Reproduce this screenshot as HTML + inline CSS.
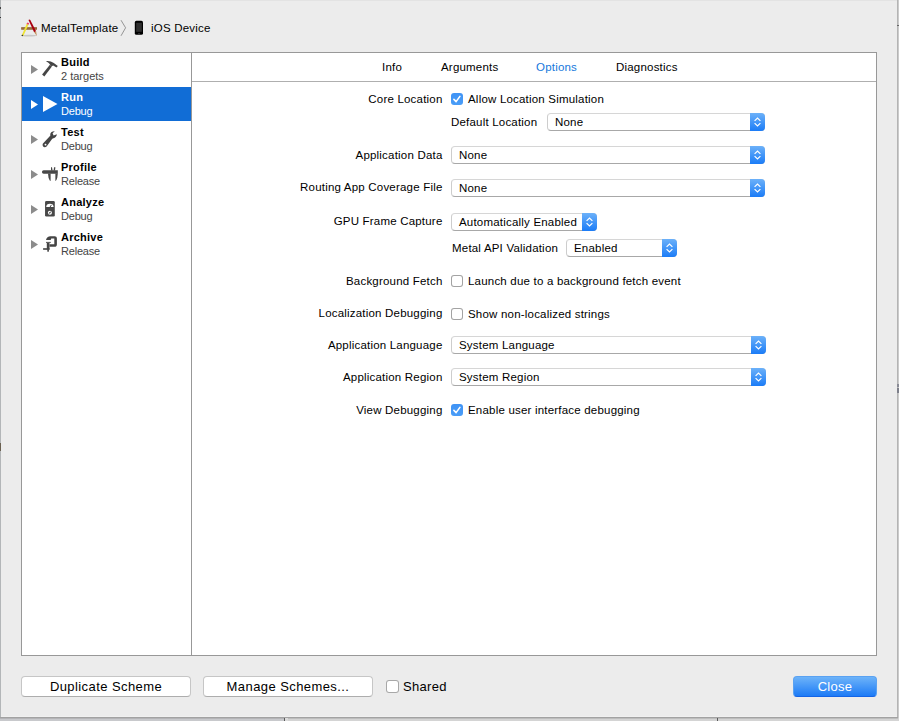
<!DOCTYPE html>
<html><head><meta charset="utf-8">
<style>
*{margin:0;padding:0;box-sizing:border-box}
html,body{width:899px;height:721px;overflow:hidden;background:#d4d4d4}
body{position:relative;font-family:"Liberation Sans",sans-serif;font-size:11.5px;letter-spacing:0.2px;color:#000}
.a{position:absolute}
.t{position:absolute;white-space:nowrap;line-height:14px;height:14px}
.r{text-align:right}
#sheet{position:absolute;left:1px;top:0;width:896px;height:716px;background:#ececec}
#box{position:absolute;left:21px;top:52px;width:856px;height:604px;border:1px solid #989898;background:#fff}
#side{position:absolute;left:22px;top:53px;width:169px;height:602px;background:#fff}
#div{position:absolute;left:191px;top:53px;width:1px;height:602px;background:#989898}
#tabline{position:absolute;left:192px;top:81px;width:684px;height:1px;background:#afafaf}
.sel{position:absolute;left:22px;top:87px;width:169px;height:34px;background:#116dd6}
.tri{position:absolute;width:0;height:0;border-top:4.5px solid transparent;border-bottom:4.5px solid transparent;border-left:7px solid #8a8a8a}
.pop{position:absolute;height:18px;background:#fff;border-radius:4px;border:1px solid #cdcdcd;border-top-color:#d6d6d6;border-bottom-color:#a8a8a8}
.pop .st{position:absolute;right:-1px;top:-1px;width:15px;height:18px;border-radius:0 4px 4px 0;background:linear-gradient(#6cb1f9,#1b7cf7)}
.pop .st svg{position:absolute;left:0;top:0}
.cb{position:absolute;width:12px;height:12px;border-radius:3px}
.cbon{background:linear-gradient(#3f93f5,#4a9df7)}
.cboff{background:#fff;box-shadow:inset 0 0 0 1px #a3a3a3}
.btn{position:absolute;height:21px;background:#fff;border-radius:4px;border:1px solid #c6c6c6;border-bottom-color:#adadad;text-align:center;font-size:13px;line-height:20px}
</style></head><body>
<div class="a" style="left:0;top:0;width:1px;height:717px;background:#b3b6b8"></div>
<div class="a" style="left:0;top:7px;width:1px;height:2px;background:#444"></div>
<div class="a" style="left:0;top:17px;width:1px;height:1px;background:#333"></div>
<div class="a" style="left:0;top:443px;width:1px;height:8px;background:#6a6050"></div>
<div class="a" style="left:0;top:718px;width:285px;height:3px;background:#c8c9cc"></div>
<div class="a" style="left:0;top:718px;width:898px;height:1px;background:rgba(120,120,120,0.25)"></div>
<div class="a" style="left:284px;top:718px;width:1px;height:3px;background:#5a5a5a"></div>
<div class="a" style="left:285px;top:718px;width:3px;height:3px;background:#dcdcdc"></div>
<div class="a" style="left:717px;top:718px;width:1px;height:3px;background:#5a5a5a"></div>
<div class="a" style="left:897px;top:0;width:1px;height:718px;background:#b4b4b4"></div>
<div class="a" style="left:898px;top:0;width:1px;height:718px;background:#cbcbcb"></div>
<div class="a" style="left:897px;top:25px;width:2px;height:1px;background:#666"></div>
<div class="a" style="left:897px;top:384px;width:2px;height:3px;background:#8a8c96"></div><div class="a" style="left:897px;top:388px;width:2px;height:5px;background:#7d7f8a"></div>
<div class="a" style="left:0;top:717px;width:898px;height:1px;background:#a2a2a2"></div>
<div id="sheet"></div>
<div class="a" style="left:1px;top:0;width:896px;height:1px;background:#e3e3e3"></div>
<div class="a" style="left:1px;top:716px;width:896px;height:1px;background:#f0f0f0"></div>
<!-- breadcrumb -->
<svg class="a" style="left:18px;top:16px" width="22" height="22" viewBox="0 0 22 22">
<ellipse cx="11" cy="19.6" rx="8" ry="0.9" fill="#bdbdbd" opacity="0.8"/>
<rect x="3.2" y="11.2" width="15.8" height="2.5" fill="#8e5f2e"/>
<rect x="3.8" y="11.9" width="14.6" height="0.6" fill="#b58a55" opacity="0.7"/>
<path d="M10.5,4 C10.9,3.3 11.9,3.3 12.3,4 L18.1,15.3 L16.1,16.3 Z" fill="#a8000e"/>
<path d="M16.1,16.2 L18.1,15.3 L18.9,19.9 Z" fill="#c39060"/>
<path d="M3.7,19.4 L8.7,7.7 L10.6,8.6 L5.3,20.1 Z" fill="#eee334"/>
<path d="M8.5,7.9 L9.3,6.5 L11.2,7.2 L10.6,8.8 Z" fill="#f0406a"/>
<path d="M3.5,19.6 L4.1,18.6 L5.2,19.7 L4.2,20.2 Z" fill="#222"/>
</svg>
<svg class="a" style="left:118px;top:16px" width="30" height="22" viewBox="0 0 30 22">
<path d="M3,4.2 L7.6,11.8 L3,19.8" stroke="#8a8a8a" stroke-width="0.9" fill="none"/>
<rect x="16.8" y="4.8" width="8.2" height="14" rx="1.6" fill="#000"/>
<rect x="18.2" y="6.8" width="5.6" height="9" fill="#2e2e2e"/>
<rect x="20.2" y="17.1" width="1.6" height="0.7" rx="0.35" fill="#555"/>
</svg>
<div class="t" style="left:41px;top:21px">MetalTemplate</div>
<div class="t" style="left:151px;top:21px">iOS Device</div>

<div id="box"></div>
<div id="div"></div>
<div id="tabline"></div>
<div class="sel"></div>

<!-- sidebar rows -->
<svg class="a" style="left:31px;top:65px" width="7" height="9" viewBox="0 0 7 9"><path d="M0,0 L7,4.5 L0,9 Z" fill="#8c8c8c"/></svg>
<svg class="a" style="left:38px;top:57px" width="24" height="24" viewBox="0 0 24 24" fill="#454545"><path d="M8,4.2 C10.5,3.7 13.5,4.5 15.8,6 L19.8,9 L18.5,10.6 L15.2,8.6 L13.6,9.3 L12.3,7.9 C11.2,6.3 9.8,5 8,4.2 Z"/><path d="M4.1,17.5 L11.9,7.7 L13.9,9.4 L6.3,19.6 Z"/></svg>
<div class="t" style="left:61px;top:55px;font-size:11px;font-weight:bold;color:#000;letter-spacing:0.25px">Build</div>
<div class="t" style="left:61px;top:69px;font-size:11px;color:#444;letter-spacing:0">2 targets</div>
<svg class="a" style="left:31px;top:100px" width="7" height="9" viewBox="0 0 7 9"><path d="M0,0 L7,4.5 L0,9 Z" fill="#fff"/></svg>
<svg class="a" style="left:38px;top:92px" width="24" height="24" viewBox="0 0 24 24" fill="#fff"><path d="M5,39 L19.5,47 L5,55 Z" transform="translate(0,-35)"/></svg>
<div class="t" style="left:61px;top:90px;font-size:11px;font-weight:bold;color:#fff;letter-spacing:0.25px">Run</div>
<div class="t" style="left:61px;top:104px;font-size:11px;color:#fff;letter-spacing:-0.2px">Debug</div>
<svg class="a" style="left:31px;top:135px" width="7" height="9" viewBox="0 0 7 9"><path d="M0,0 L7,4.5 L0,9 Z" fill="#8c8c8c"/></svg>
<svg class="a" style="left:38px;top:127px" width="24" height="24" viewBox="0 0 24 24" fill="#454545"><path d="M12.2,10.8 L12.3,7 C12.5,5.2 14.2,4.1 16.8,4.2 L14.6,6.2 L15.6,8.6 L18.9,7.3 C18.7,9.6 17.2,11.2 14.6,11.4 Z"/><path d="M5.2,16.2 L12.2,8.8 L14.8,11 L8.6,19.4 C7.6,20.4 5.6,20.4 5,19.2 C4.4,18.2 4.5,16.9 5.2,16.2 Z M6.6,17.3 A0.9,0.9 0 1 0 8.4,17.9 A0.9,0.9 0 1 0 6.6,17.3 Z" fill-rule="evenodd"/></svg>
<div class="t" style="left:61px;top:125px;font-size:11px;font-weight:bold;color:#000;letter-spacing:0.25px">Test</div>
<div class="t" style="left:61px;top:139px;font-size:11px;color:#444;letter-spacing:-0.2px">Debug</div>
<svg class="a" style="left:31px;top:170px" width="7" height="9" viewBox="0 0 7 9"><path d="M0,0 L7,4.5 L0,9 Z" fill="#8c8c8c"/></svg>
<svg class="a" style="left:38px;top:162px" width="24" height="24" viewBox="0 0 24 24" fill="#484848"><g transform="translate(0,0.9)"><path d="M5.6,7.3 L19.8,7.3 L19.8,10.8 L5.6,10.8 C4.7,10.8 4,10.1 4,9.05 C4,8 4.7,7.3 5.6,7.3 Z"/><path d="M10,10.5 L12.6,10.5 L12.6,18.1 C12,17.8 11.2,17.1 10.5,14.5 Z"/><path d="M17.4,10.5 L19.8,10.5 L19.3,14.5 C18.8,16.9 18,17.8 17.4,18.1 Z"/><path d="M13,4.4 L14,4.4 L14.6,7.5 L13,7.5 Z"/><path d="M16,4.4 L17.4,4.4 L17,7.5 L15.6,7.5 Z"/></g></svg>
<div class="t" style="left:61px;top:160px;font-size:11px;font-weight:bold;color:#000;letter-spacing:0.25px">Profile</div>
<div class="t" style="left:61px;top:174px;font-size:11px;color:#444;letter-spacing:-0.2px">Release</div>
<svg class="a" style="left:31px;top:205px" width="7" height="9" viewBox="0 0 7 9"><path d="M0,0 L7,4.5 L0,9 Z" fill="#8c8c8c"/></svg>
<svg class="a" style="left:38px;top:197px" width="24" height="24" viewBox="0 0 24 24"><rect x="7.05" y="4" width="9.75" height="15.6" rx="1.3" fill="#484848"/><path d="M8.2,10.1 A3.7,3.4 0 0 1 15.6,10.1 Z" fill="#fff"/><path d="M11.9,10.3 L13.4,7.9" stroke="#484848" stroke-width="1" fill="none"/><circle cx="11.9" cy="15.7" r="1.35" stroke="#fff" stroke-width="1.4" fill="none"/><path d="M10.6,16.9 L13.2,14.5" stroke="#484848" stroke-width="0.8" fill="none"/></svg>
<div class="t" style="left:61px;top:195px;font-size:11px;font-weight:bold;color:#000;letter-spacing:0.25px">Analyze</div>
<div class="t" style="left:61px;top:209px;font-size:11px;color:#444;letter-spacing:-0.2px">Debug</div>
<svg class="a" style="left:31px;top:240px" width="7" height="9" viewBox="0 0 7 9"><path d="M0,0 L7,4.5 L0,9 Z" fill="#8c8c8c"/></svg>
<svg class="a" style="left:38px;top:232px" width="24" height="24" viewBox="0 0 24 24" fill="#454545"><path d="M8,8.1 C8.4,5.8 10.2,4.2 12.5,4.2 L16.6,4.2 C18,4.2 18.9,5.1 18.9,6.5 L18.9,12.5 C18.9,13.9 18,14.8 16.6,14.8 L11.5,14.8 L11.5,12.3 L16.3,12.3 L16.3,6.6 L13.6,6.6 C13.1,6.6 12.8,7.2 12.8,8.1 Z"/><rect x="8" y="9.9" width="4.8" height="0.9"/><rect x="8.8" y="10.8" width="2.7" height="6.8"/><rect x="9.3" y="17.4" width="1.6" height="2.3"/><rect x="5.1" y="16.2" width="6.4" height="1.6"/></svg>
<div class="t" style="left:61px;top:230px;font-size:11px;font-weight:bold;color:#000;letter-spacing:0.25px">Archive</div>
<div class="t" style="left:61px;top:244px;font-size:11px;color:#444;letter-spacing:-0.2px">Release</div>

<!-- tabs -->
<div class="t" style="left:382px;top:60px">Info</div>
<div class="t" style="left:441px;top:60px">Arguments</div>
<div class="t" style="left:536px;top:60px;color:#1577dc">Options</div>
<div class="t" style="left:616px;top:60px">Diagnostics</div>

<!-- form -->
<div class="t r" style="left:242.5px;width:200px;top:92px">Core Location</div>
<div class="cb cbon" style="left:451px;top:93px"><svg width="12" height="12" viewBox="0 0 12 12"><path d="M2.9,6.4 L5.1,8.6 L8.9,3.4" stroke="#fff" stroke-width="1.6" fill="none" stroke-linecap="round" stroke-linejoin="round"/></svg></div>
<div class="t" style="left:468px;top:92px">Allow Location Simulation</div>
<div class="t" style="left:451px;top:115px">Default Location</div>
<div class="pop" style="left:547px;top:113px;width:218px"><div class="st"><svg width="15" height="18" viewBox="0 0 15 18"><path d="M4.6,7.9 L7.5,5 L10.4,7.9 M4.6,10.1 L7.5,13 L10.4,10.1" stroke="#fff" stroke-width="1.2" fill="none"/></svg></div></div>
<div class="t" style="left:555px;top:115px">None</div>

<div class="t r" style="left:242.5px;width:200px;top:148px">Application Data</div>
<div class="pop" style="left:451px;top:146px;width:314px"><div class="st"><svg width="15" height="18" viewBox="0 0 15 18"><path d="M4.6,7.9 L7.5,5 L10.4,7.9 M4.6,10.1 L7.5,13 L10.4,10.1" stroke="#fff" stroke-width="1.2" fill="none"/></svg></div></div>
<div class="t" style="left:459px;top:148px">None</div>

<div class="t r" style="left:242.5px;width:200px;top:180px">Routing App Coverage File</div>
<div class="pop" style="left:451px;top:179px;width:314px"><div class="st"><svg width="15" height="18" viewBox="0 0 15 18"><path d="M4.6,7.9 L7.5,5 L10.4,7.9 M4.6,10.1 L7.5,13 L10.4,10.1" stroke="#fff" stroke-width="1.2" fill="none"/></svg></div></div>
<div class="t" style="left:459px;top:181px">None</div>

<div class="t r" style="left:242.5px;width:200px;top:214px">GPU Frame Capture</div>
<div class="pop" style="left:451px;top:213px;width:146px"><div class="st"><svg width="15" height="18" viewBox="0 0 15 18"><path d="M4.6,7.9 L7.5,5 L10.4,7.9 M4.6,10.1 L7.5,13 L10.4,10.1" stroke="#fff" stroke-width="1.2" fill="none"/></svg></div></div>
<div class="t" style="left:459px;top:215px">Automatically Enabled</div>
<div class="t" style="left:452px;top:241px">Metal API Validation</div>
<div class="pop" style="left:566px;top:239px;width:111px"><div class="st"><svg width="15" height="18" viewBox="0 0 15 18"><path d="M4.6,7.9 L7.5,5 L10.4,7.9 M4.6,10.1 L7.5,13 L10.4,10.1" stroke="#fff" stroke-width="1.2" fill="none"/></svg></div></div>
<div class="t" style="left:574px;top:241px">Enabled</div>

<div class="t r" style="left:242.5px;width:200px;top:274px">Background Fetch</div>
<div class="cb cboff" style="left:451px;top:275px"></div>
<div class="t" style="left:468px;top:274px">Launch due to a background fetch event</div>

<div class="t r" style="left:242.5px;width:200px;top:306px">Localization Debugging</div>
<div class="cb cboff" style="left:451px;top:308px"></div>
<div class="t" style="left:468px;top:307px">Show non-localized strings</div>

<div class="t r" style="left:242.5px;width:200px;top:338px">Application Language</div>
<div class="pop" style="left:451px;top:336px;width:315px"><div class="st"><svg width="15" height="18" viewBox="0 0 15 18"><path d="M4.6,7.9 L7.5,5 L10.4,7.9 M4.6,10.1 L7.5,13 L10.4,10.1" stroke="#fff" stroke-width="1.2" fill="none"/></svg></div></div>
<div class="t" style="left:459px;top:338px">System Language</div>

<div class="t r" style="left:242.5px;width:200px;top:370px">Application Region</div>
<div class="pop" style="left:451px;top:368px;width:315px"><div class="st"><svg width="15" height="18" viewBox="0 0 15 18"><path d="M4.6,7.9 L7.5,5 L10.4,7.9 M4.6,10.1 L7.5,13 L10.4,10.1" stroke="#fff" stroke-width="1.2" fill="none"/></svg></div></div>
<div class="t" style="left:459px;top:370px">System Region</div>

<div class="t r" style="left:242.5px;width:200px;top:403px">View Debugging</div>
<div class="cb cbon" style="left:451px;top:404px"><svg width="12" height="12" viewBox="0 0 12 12"><path d="M2.9,6.4 L5.1,8.6 L8.9,3.4" stroke="#fff" stroke-width="1.6" fill="none" stroke-linecap="round" stroke-linejoin="round"/></svg></div>
<div class="t" style="left:468px;top:403px">Enable user interface debugging</div>

<!-- bottom -->
<div class="btn" style="left:21px;top:676px;width:170px;letter-spacing:0.42px">Duplicate Scheme</div>
<div class="btn" style="left:203px;top:676px;width:170px;letter-spacing:0.42px">Manage Schemes...</div>
<div class="cb cboff" style="left:386px;top:680px;width:13px;height:13px;border-radius:3px;box-shadow:inset 0 0 0 1px #a8a8a8"></div>
<div class="t" style="left:403px;top:680px;font-size:13px;letter-spacing:0.3px">Shared</div>
<div class="btn" style="left:793px;top:676px;width:84px;color:#fff;background:linear-gradient(#6db3f9,#1d7bf6);border-color:#5aa2f2;border-bottom-color:#1464e6;letter-spacing:0.3px">Close</div>
</body></html>
